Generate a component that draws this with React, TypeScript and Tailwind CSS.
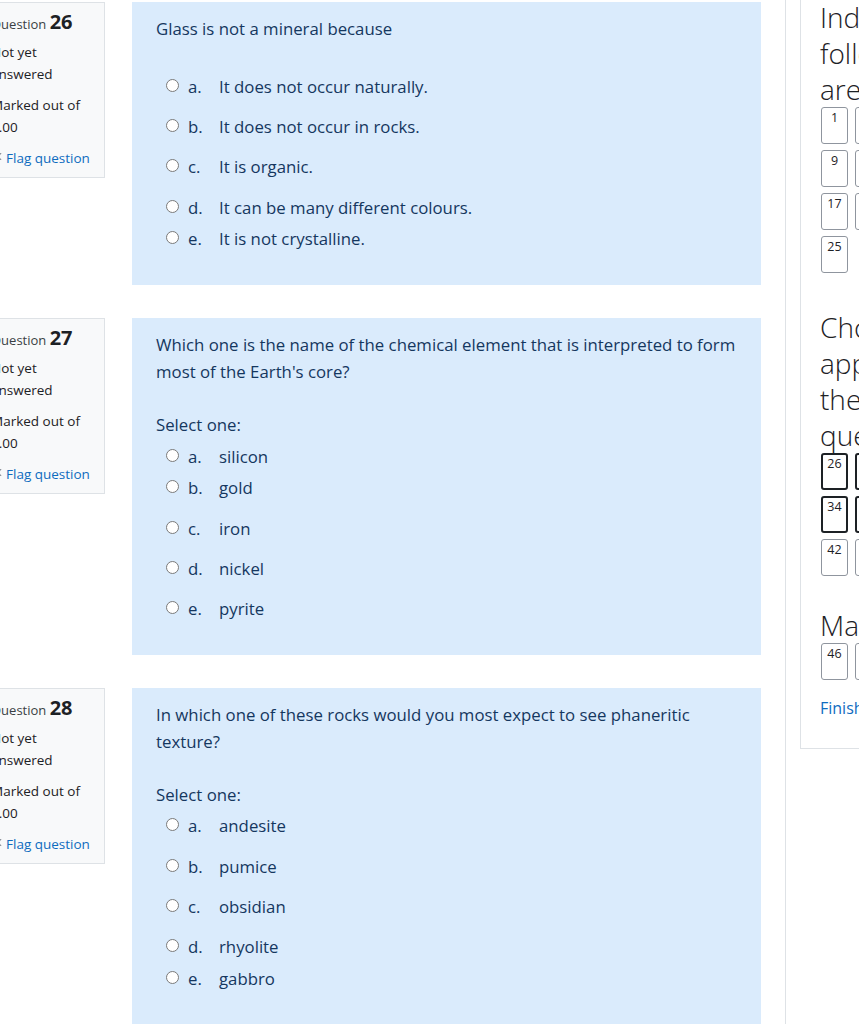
import React from 'react';

type Option = { letter: string; text: string; gap: string };
type Question = {
  num: number;
  lines: string[];
  selectOne: boolean;
  options: Option[];
};

const questions: Question[] = [
  {
    num: 26,
    lines: ['Glass is not a mineral because'],
    selectOne: false,
    options: [
      { letter: 'a.', text: 'It does not occur naturally.', gap: 'mt-[34px]' },
      { letter: 'b.', text: 'It does not occur in rocks.', gap: 'mt-[18px]' },
      { letter: 'c.', text: 'It is organic.', gap: 'mt-[18px]' },
      { letter: 'd.', text: 'It can be many different colours.', gap: 'mt-[19px]' },
      { letter: 'e.', text: 'It is not crystalline.', gap: 'mt-[9px]' },
    ],
  },
  {
    num: 27,
    lines: [
      'Which one is the name of the chemical element that is interpreted to form',
      "most of the Earth's core?",
    ],
    selectOne: true,
    options: [
      { letter: 'a.', text: 'silicon', gap: 'mt-[10px]' },
      { letter: 'b.', text: 'gold', gap: 'mt-[9px]' },
      { letter: 'c.', text: 'iron', gap: 'mt-[19px]' },
      { letter: 'd.', text: 'nickel', gap: 'mt-[18px]' },
      { letter: 'e.', text: 'pyrite', gap: 'mt-[18px]' },
    ],
  },
  {
    num: 28,
    lines: [
      'In which one of these rocks would you most expect to see phaneritic',
      'texture?',
    ],
    selectOne: true,
    options: [
      { letter: 'a.', text: 'andesite', gap: 'mt-[9px]' },
      { letter: 'b.', text: 'pumice', gap: 'mt-[19px]' },
      { letter: 'c.', text: 'obsidian', gap: 'mt-[18px]' },
      { letter: 'd.', text: 'rhyolite', gap: 'mt-[18px]' },
      { letter: 'e.', text: 'gabbro', gap: 'mt-[10px]' },
    ],
  },
];

const FlagIcon = () => (
  <svg className="shrink-0" width="12" height="13" viewBox="0 0 12 13" fill="none" stroke="#8f959e" strokeWidth="1.2">
    <path d="M1.5 1v11.5" />
    <path d="M1.5 1.5h8l-2 3 2 3h-8" />
  </svg>
);

const QuestionBlock = ({ q }: { q: Question }) => (
  <div className="flex items-start gap-[27px] mb-[33px]">
    {/* info box */}
    <div className="w-[123px] shrink-0 border border-[#dee2e6] bg-[#f8f9fa] px-[8px] pt-[4px] pb-[8px] text-[13.5px] text-[#1d2125]">
      <div className="leading-[30px] whitespace-nowrap">
        <span className="text-[13px] text-[#3a3f44]">Question </span>
        <span className="text-[20px] font-bold">{q.num}</span>
      </div>
      <div className="mt-[2px] leading-[22px]">
        Not yet
        <br />
        answered
      </div>
      <div className="mt-[9px] leading-[22px]">
        Marked out of
        <br />
        1.00
      </div>
      <div className="mt-[9px] flex items-center gap-[3px] leading-[22px] text-[#0f6cbf] whitespace-nowrap">
        <FlagIcon />
        <span>Flag question</span>
      </div>
    </div>

    {/* formulation */}
    <div className="w-[629px] shrink-0 bg-[#daebfc] px-[24px] pt-[13px] pb-[35px] text-[16.8px] text-[#15375f]">
      <div className="leading-[27px]">
        {q.lines.map((l) => (
          <div key={l} className="whitespace-nowrap">
            {l}
          </div>
        ))}
      </div>
      {q.selectOne && <div className="mt-[29px] leading-[22px]">Select one:</div>}
      <div className="pl-[10px]">
        {q.options.map((o) => (
          <div key={o.letter} className={`${o.gap} flex items-center leading-[22px]`}>
            <span className="w-[13px] h-[13px] rounded-full border border-[#7a7a7a] bg-white shrink-0 -mt-[3px]" />
            <span className="ml-[9px] w-[31px] shrink-0">{o.letter}</span>
            <span className="whitespace-nowrap">{o.text}</span>
          </div>
        ))}
      </div>
    </div>
  </div>
);

const NavButton = ({ n, thick }: { n: number; thick?: boolean }) => (
  <div
    className={
      thick
        ? 'w-[27px] h-[37px] rounded-[3px] border-2 border-[#1d2125] text-center text-[12.5px] leading-[16px] pt-[1px] text-[#1d2125]'
        : 'w-[27px] h-[37px] rounded-[3px] border border-[#8f959e] text-center text-[12.5px] leading-[16px] pt-[2px] text-[#1d2125]'
    }
  >
    {n}
  </div>
);

const range = (a: number, b: number) => Array.from({ length: b - a + 1 }, (_, i) => a + i);

export default function App() {
  return (
    <div className="w-[859px] h-[1024px] overflow-hidden bg-white font-['Open_Sans','Noto_Sans',sans-serif]">
      <div className="flex items-stretch h-full">
        {/* questions column */}
        <div className="-ml-[18px] mt-[2px] shrink-0">
          {questions.map((q) => (
            <QuestionBlock key={q.num} q={q} />
          ))}
        </div>

        {/* drawer border */}
        <div className="ml-[24px] w-px shrink-0 bg-[#dee2e6]" />

        {/* quiz navigation block */}
        <div className="ml-[14px] self-start -mt-[20px] w-[320px] shrink-0 border border-[#dee2e6] bg-white pl-[19px] pt-[18px] pb-[29px] text-[#1d2125]">
          <h3 className="text-[28px] font-light leading-[36px] whitespace-nowrap">
            Indicate whether the
            <br />
            following statements
            <br />
            are true or false
          </h3>
          <div className="ml-[1px] flex flex-wrap gap-x-[7px] gap-y-[6px] w-[265px]">
            {range(1, 25).map((n) => (
              <NavButton key={n} n={n} />
            ))}
          </div>

          <h3 className="mt-[36px] text-[28px] font-light leading-[36px] whitespace-nowrap">
            Choose the most
            <br />
            appropriate answer for
            <br />
            the following
            <br />
            questions
          </h3>
          <div className="ml-[1px] flex flex-wrap gap-x-[7px] gap-y-[6px] w-[265px]">
            {range(26, 45).map((n) => (
              <NavButton key={n} n={n} thick={n <= 41} />
            ))}
          </div>

          <h3 className="mt-[31px] text-[28px] font-light leading-[36px] whitespace-nowrap">Matching</h3>
          <div className="ml-[1px] flex flex-wrap gap-x-[7px] gap-y-[6px] w-[265px]">
            {range(46, 50).map((n) => (
              <NavButton key={n} n={n} />
            ))}
          </div>

          <div className="mt-[17px] text-[16px] leading-[22px] text-[#0f6cbf]">Finish attempt ...</div>
        </div>
      </div>
    </div>
  );
}
